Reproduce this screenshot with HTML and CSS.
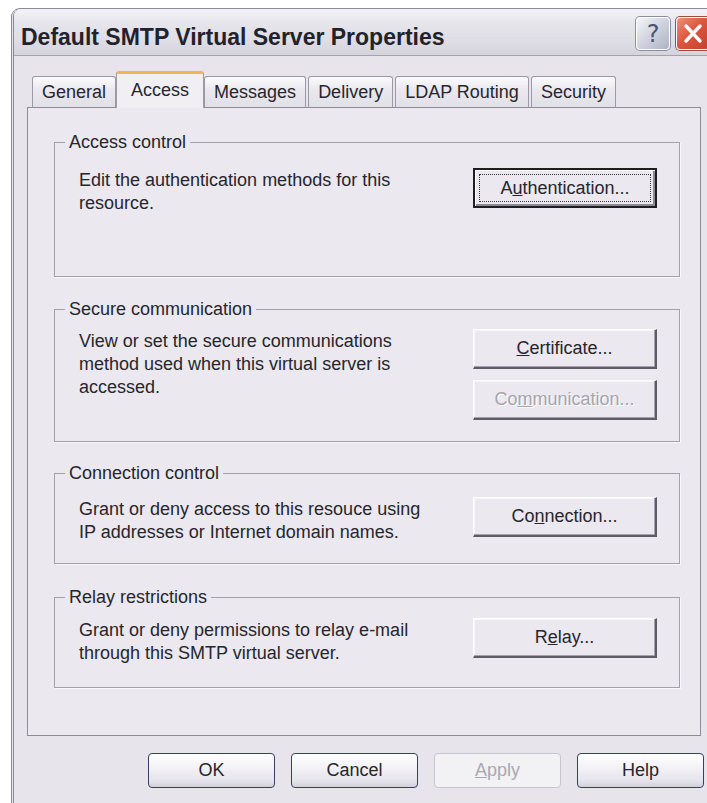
FILE: index.html
```html
<!DOCTYPE html>
<html lang="en">
<head>
<meta charset="utf-8">
<title>Default SMTP Virtual Server Properties</title>
<link rel="stylesheet" href="styles.css">
</head>
<body>
<div class="window">
  <div class="titlebar">
    <span class="title">Default SMTP Virtual Server Properties</span>
    <div class="caption-buttons">
      <span class="cap-btn cap-help">?</span>
      <span class="cap-btn cap-close">
        <svg width="24" height="23" viewBox="0 0 24 23" aria-hidden="true">
          <path d="M5 4 L19 19 M19 4 L5 19" stroke="#fff" stroke-width="3.4" stroke-linecap="round" fill="none"/>
        </svg>
      </span>
    </div>
  </div>

  <div class="client">
    <div class="tabs">
      <span class="tab">General</span>
      <span class="tab tab-active">Access</span>
      <span class="tab">Messages</span>
      <span class="tab">Delivery</span>
      <span class="tab">LDAP Routing</span>
      <span class="tab">Security</span>
    </div>

    <div class="tab-page">
      <section class="group group-access">
        <div class="group-title">Access control</div>
        <div class="group-row">
          <p class="group-desc">Edit the authentication methods for this<br>resource.</p>
          <div class="group-actions">
            <button class="btn btn-default"><span class="focus-ring">A<u>u</u>thentication...</span></button>
          </div>
        </div>
      </section>

      <section class="group group-secure">
        <div class="group-title">Secure communication</div>
        <div class="group-row">
          <p class="group-desc">View or set the secure communications<br>method used when this virtual server is<br>accessed.</p>
          <div class="group-actions">
            <button class="btn"><u>C</u>ertificate...</button>
            <button class="btn" disabled>Co<u>m</u>munication...</button>
          </div>
        </div>
      </section>

      <section class="group group-connection">
        <div class="group-title">Connection control</div>
        <div class="group-row">
          <p class="group-desc">Grant or deny access to this resouce using<br>IP addresses or Internet domain names.</p>
          <div class="group-actions">
            <button class="btn">Co<u>n</u>nection...</button>
          </div>
        </div>
      </section>

      <section class="group group-relay">
        <div class="group-title">Relay restrictions</div>
        <div class="group-row">
          <p class="group-desc">Grant or deny permissions to relay e-mail<br>through this SMTP virtual server.</p>
          <div class="group-actions">
            <button class="btn">R<u>e</u>lay...</button>
          </div>
        </div>
      </section>
    </div>

    <div class="dialog-buttons">
      <button class="xp-btn">OK</button>
      <button class="xp-btn">Cancel</button>
      <button class="xp-btn" disabled><u>A</u>pply</button>
      <button class="xp-btn">Help</button>
    </div>
  </div>
</div>
</body>
</html>
```

FILE: styles.css
```css
html, body {
  margin: 0;
  height: 100%;
  overflow: hidden;
  background: #ffffff;
}

body {
  font-family: "Liberation Sans", Arial, sans-serif;
  font-size: 18px;
  color: #26262c;
}

/* Window frame */
.window {
  margin: 8px 0 0 11px;
  width: 703px;
  padding-bottom: 40px;
  background: #e7e4eb;
  border-top: 1px solid #8b8995;
  border-left: 3px double #8b8995;
  border-radius: 9px 0 0 0;
}

.titlebar {
  display: flex;
  align-items: flex-start;
  height: 46px;
  padding: 0 7px;
  border-bottom: 1px solid #a4a2ad;
  border-radius: 7px 0 0 0;
  background: linear-gradient(#f3f3f7 0%, #e6e5ec 30%, #dedde5 70%, #d5d3dc 100%);
}

.title {
  margin-top: 15px;
  font-size: 23px;
  line-height: 27px;
  font-weight: bold;
  color: #22222b;
  white-space: nowrap;
}

.caption-buttons {
  display: flex;
  gap: 6px;
  margin-left: auto;
  margin-top: 8px;
}

.cap-btn {
  display: flex;
  align-items: center;
  justify-content: center;
  width: 34px;
  height: 33px;
  box-sizing: border-box;
  border-radius: 4px;
  border: 1px solid #ffffff;
}

.cap-help {
  background: linear-gradient(135deg, #f4f5f9 0%, #d3d6e1 45%, #aeb2c4 100%);
  box-shadow: 0 0 0 1px #8b8fa4;
  color: #4a5570;
  font-family: "DejaVu Sans", sans-serif;
  font-size: 24px;
  line-height: 1;
}

.cap-close {
  background: linear-gradient(135deg, #f0907a 0%, #dc5740 45%, #c23f2b 100%);
  box-shadow: 0 0 0 1px #a14a3e;
}

/* Dialog client area */
.client {
  padding: 15px 0 0 13px;
}

.tabs {
  display: flex;
  align-items: flex-end;
  gap: 2px;
  margin-left: 5px;
}

.tab {
  display: flex;
  align-items: center;
  height: 31px;
  box-sizing: border-box;
  padding: 0 9px;
  border: 1px solid #9c9aa6;
  border-bottom: none;
  border-radius: 3px 3px 0 0;
  background: linear-gradient(#fbfbfc, #ebe9ef 40%, #e2e0e7);
  white-space: nowrap;
}

.tab-active {
  position: relative;
  z-index: 2;
  height: 37px;
  margin: 0 -2px -1px;
  padding: 0 14px 2px;
  border-top: 3px solid #f2b64a;
  background: #f1eff4;
}

.tab-page {
  width: 674px;
  height: 629px;
  box-sizing: border-box;
  padding: 34px 20px 0 26px;
  border: 1px solid #8e8c98;
  background: #ebe8ef;
}

/* Group boxes */
.group {
  box-sizing: border-box;
  border: 1px solid #a3a1ac;
  box-shadow: 1px 1px 0 #f8f7fa;
}

.group-access { height: 135px; }
.group-secure { height: 133px; margin-top: 32px; }
.group-connection { height: 91px; margin-top: 31px; }
.group-relay { height: 91px; margin-top: 33px; }

.group-title {
  width: max-content;
  margin: -12px 0 0 10px;
  padding: 0 4px;
  line-height: 23px;
  background: #ebe8ef;
}

.group-row {
  display: flex;
  justify-content: space-between;
  align-items: flex-start;
  padding: 9px 22px 0 24px;
}

.group-access .group-row { padding-top: 14px; }
.group-secure .group-row { padding-top: 8px; }
.group-connection .group-row { padding-top: 12px; }

.group-desc {
  margin: 1px 0 0;
  line-height: 23px;
}

.group-actions {
  display: flex;
  flex-direction: column;
  gap: 11px;
}

/* Classic 3D push buttons */
.btn {
  width: 184px;
  height: 40px;
  box-sizing: border-box;
  padding: 0;
  font: inherit;
  color: #26262c;
  background: #ebe8ef;
  border: 1px solid;
  border-color: #ffffff #5e5c67 #5e5c67 #ffffff;
  border-width: 1px 2px 2px 1px;
  box-shadow: inset -1px -1px 0 #a3a1ac, inset 1px 1px 0 #f6f5f8;
}

.btn:disabled {
  color: #a6a4ad;
  text-shadow: 1px 1px 0 #ffffff;
}

.btn-default {
  display: flex;
  padding: 4px;
  border: 2px solid #1d1d22;
  box-shadow: inset 1px 1px 0 #ffffff, inset -2px -2px 0 #8c8a95;
}

.focus-ring {
  display: flex;
  flex: 1;
  align-items: center;
  justify-content: center;
  border: 1px dotted #34343a;
}

/* Themed OK / Cancel / Apply / Help buttons */
.dialog-buttons {
  display: flex;
  gap: 16px;
  margin-top: 17px;
  padding-left: 121px;
}

.xp-btn {
  width: 127px;
  height: 35px;
  box-sizing: border-box;
  padding: 0;
  font: inherit;
  color: #26262c;
  border: 1px solid #34425f;
  border-radius: 4px;
  background: linear-gradient(#ffffff 0%, #f3f2f6 40%, #e6e4ec 80%, #d2d0dc 100%);
}

.xp-btn:disabled {
  color: #aaa8b1;
  border-color: #c7c5cd;
  background: #f2f1f4;
}
```
